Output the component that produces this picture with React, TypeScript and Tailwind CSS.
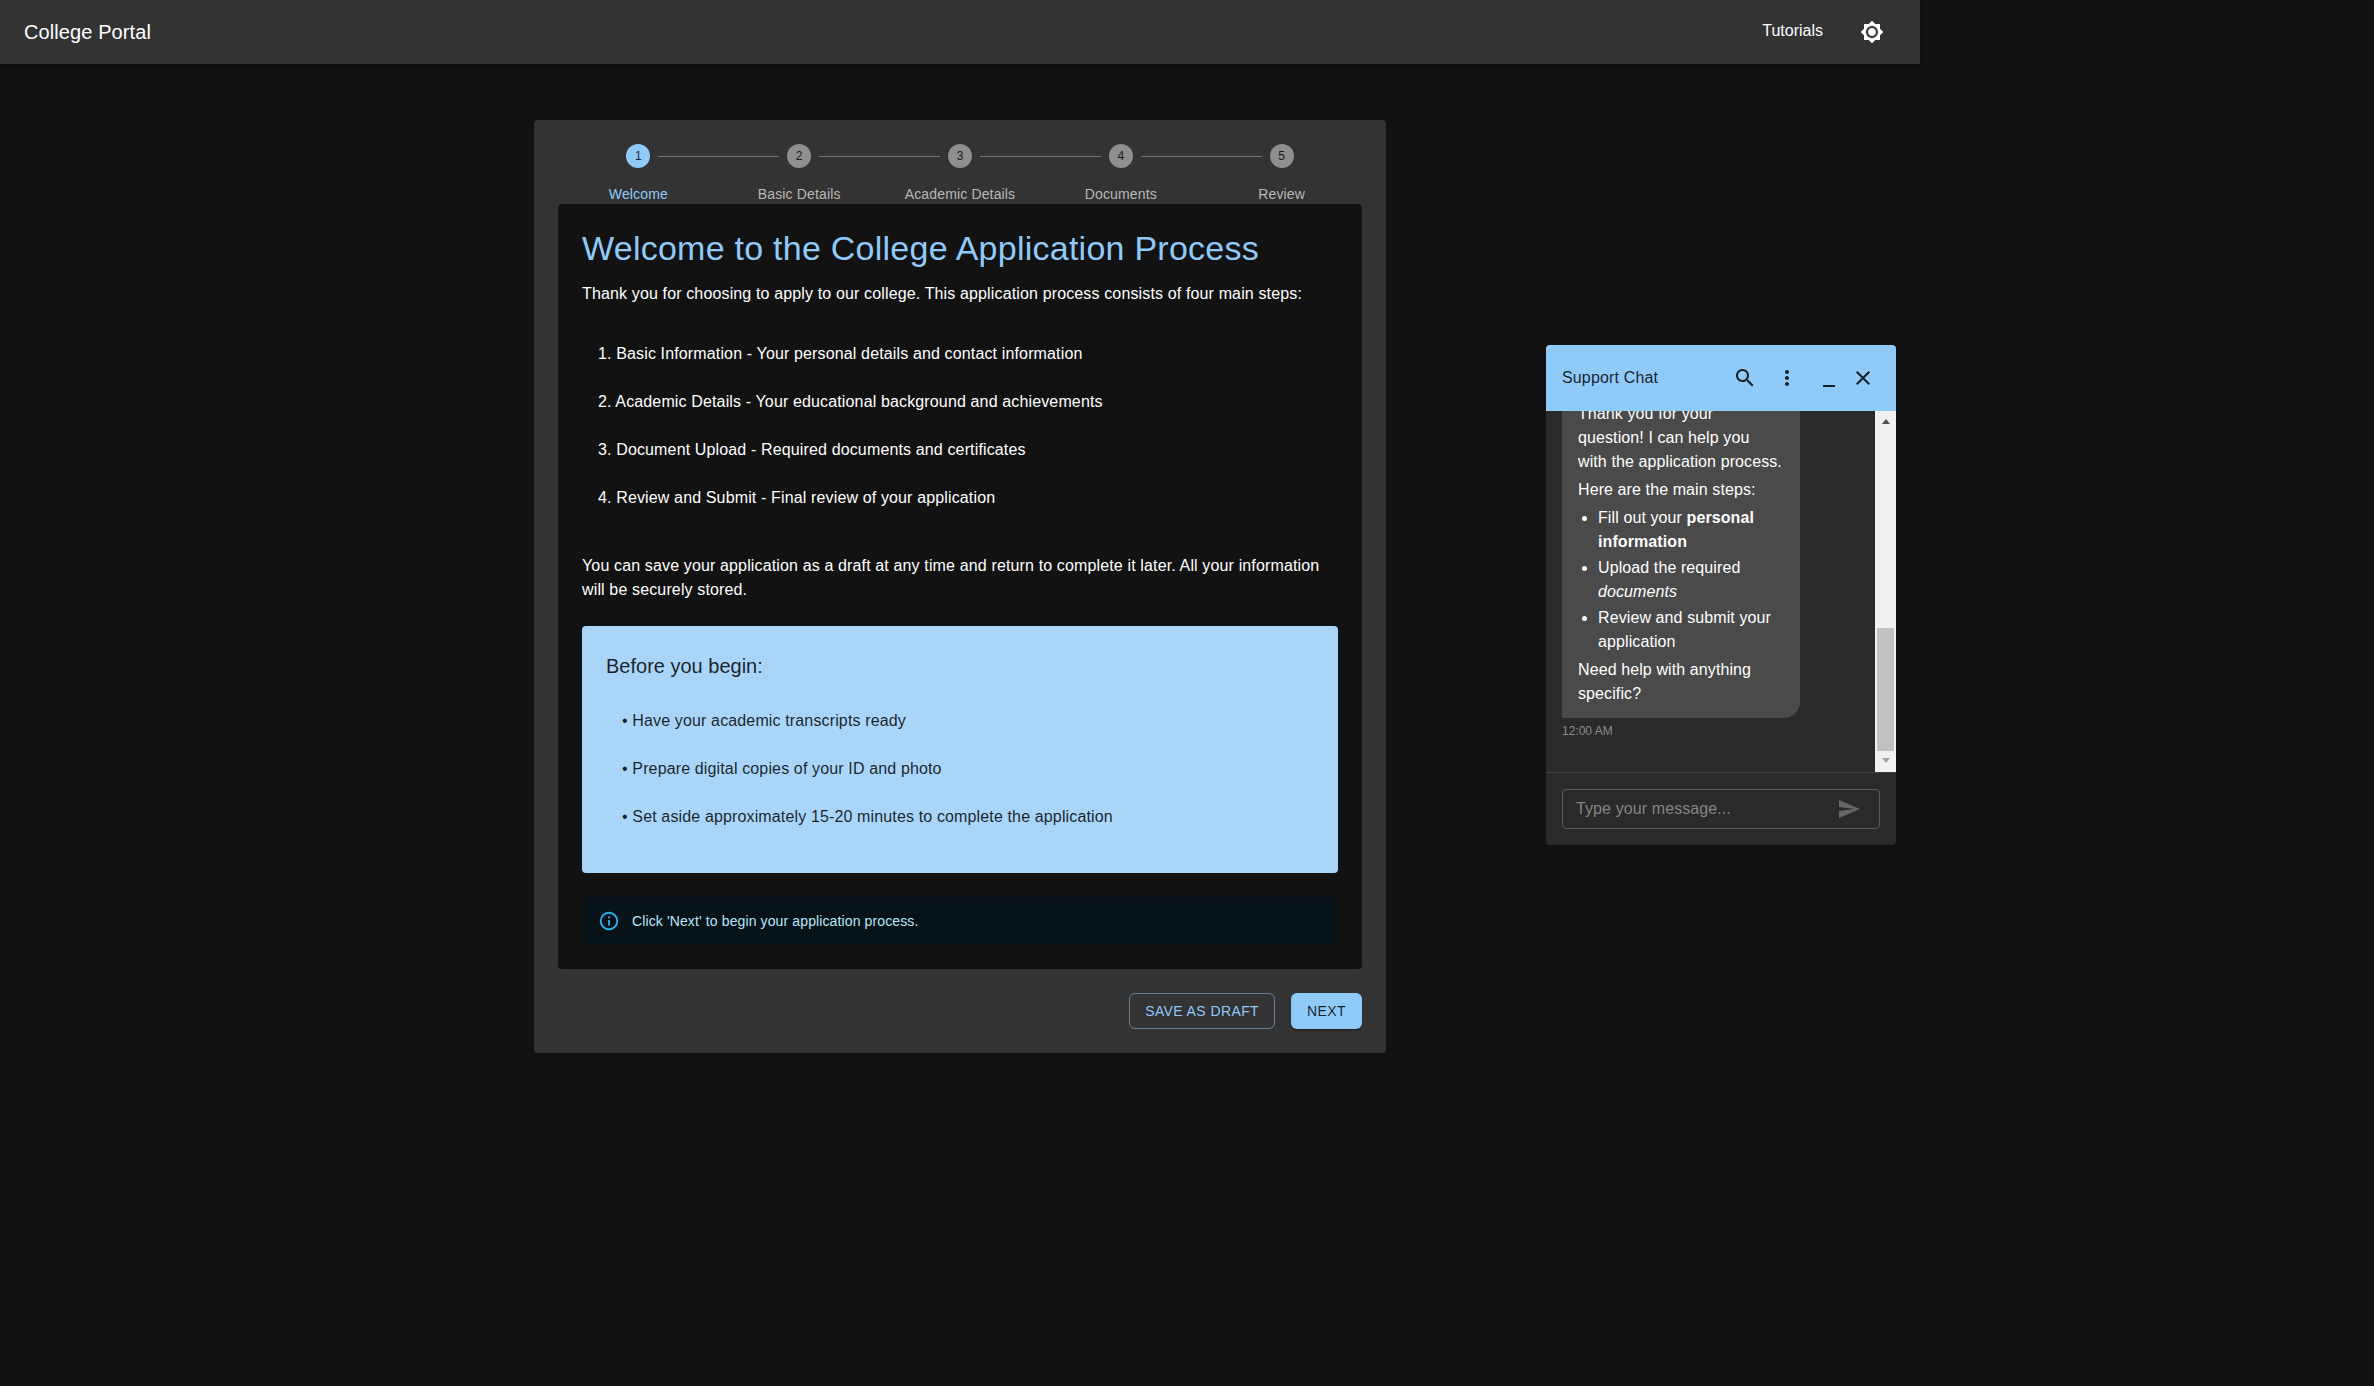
import React from 'react';

const STEPS = ['Welcome', 'Basic Details', 'Academic Details', 'Documents', 'Review'];

const MAIN_STEPS = [
  '1. Basic Information - Your personal details and contact information',
  '2. Academic Details - Your educational background and achievements',
  '3. Document Upload - Required documents and certificates',
  '4. Review and Submit - Final review of your application',
];

const CHECKLIST = [
  '• Have your academic transcripts ready',
  '• Prepare digital copies of your ID and photo',
  '• Set aside approximately 15-20 minutes to complete the application',
];

function Icon({ d, className }: { d: string; className?: string }) {
  return (
    <svg viewBox="0 0 24 24" fill="currentColor" className={className ?? 'h-6 w-6'}>
      <path d={d} />
    </svg>
  );
}

const ICONS = {
  brightness:
    'M20 8.69V4h-4.69L12 .69 8.69 4H4v4.69L.69 12 4 15.31V20h4.69L12 23.31 15.31 20H20v-4.69L23.31 12 20 8.69zM12 18c-3.31 0-6-2.69-6-6s2.69-6 6-6 6 2.69 6 6-2.69 6-6 6zm0-10c-2.21 0-4 1.79-4 4s1.79 4 4 4 4-1.79 4-4-1.79-4-4-4z',
  search:
    'M15.5 14h-.79l-.28-.27C15.41 12.59 16 11.11 16 9.5 16 5.91 13.09 3 9.5 3S3 5.91 3 9.5 5.91 16 9.5 16c1.61 0 3.09-.59 4.23-1.57l.27.28v.79l5 4.99L20.49 19l-4.99-5zm-6 0C7.01 14 5 11.99 5 9.5S7.01 5 9.5 5 14 7.01 14 9.5 11.99 14 9.5 14z',
  more: 'M12 8c1.1 0 2-.9 2-2s-.9-2-2-2-2 .9-2 2 .9 2 2 2zm0 2c-1.1 0-2 .9-2 2s.9 2 2 2 2-.9 2-2-.9-2-2-2zm0 6c-1.1 0-2 .9-2 2s.9 2 2 2 2-.9 2-2-.9-2-2-2z',
  minimize: 'M6 19h12v2H6z',
  close: 'M19 6.41 17.59 5 12 10.59 6.41 5 5 6.41 10.59 12 5 17.59 6.41 19 12 13.41 17.59 19 19 17.59 13.41 12z',
  send: 'M2.01 21 23 12 2.01 3 2 10l15 2-15 2z',
  info: 'M11,9H13V7H11M12,20C7.59,20 4,16.41 4,12C4,7.59 7.59,4 12,4C16.41,4 20,7.59 20,12C20,16.41 16.41,20 12,20M12,2A10,10 0 0,0 2,12A10,10 0 0,0 12,22A10,10 0 0,0 22,12A10,10 0 0,0 12,2M11,17H13V11H11V17Z',
};

function Stepper() {
  return (
    <div className="grid grid-cols-5">
      {STEPS.map((label, i) => (
        <div key={label} className="relative flex flex-col items-center">
          {i > 0 && (
            <div className="absolute top-3 right-[calc(50%+20px)] left-[calc(-50%+20px)] h-px bg-[#757575]" />
          )}
          <div
            className={
              i === 0
                ? 'flex h-6 w-6 items-center justify-center rounded-full bg-[#90caf9] text-xs text-black/85'
                : 'flex h-6 w-6 items-center justify-center rounded-full bg-[#8f8f8f] text-xs text-black/85'
            }
          >
            {i + 1}
          </div>
          <div
            className={
              i === 0
                ? 'mt-4 h-5 text-sm leading-5 tracking-[0.15px] text-[#90caf9]'
                : 'mt-4 h-5 text-sm leading-5 tracking-[0.15px] text-[#b8b8b8]'
            }
          >
            {label}
          </div>
        </div>
      ))}
    </div>
  );
}

function ChatWidget() {
  return (
    <div className="absolute top-[345px] right-6 flex h-[500px] w-[350px] flex-col overflow-hidden rounded bg-[#2a2a2a] shadow-[0_8px_10px_-5px_rgba(0,0,0,0.2)]">
      <div className="flex h-[66px] shrink-0 items-center bg-[#90caf9] px-4 text-black/85">
        <span className="flex-1 text-base tracking-[0.15px]">Support Chat</span>
        <Icon d={ICONS.search} className="mr-[18px] h-6 w-6" />
        <Icon d={ICONS.more} className="mr-[18px] h-6 w-6" />
        <Icon d={ICONS.minimize} className="mr-[10px] h-6 w-6" />
        <Icon d={ICONS.close} className="mr-[5px] h-6 w-6" />
      </div>

      <div className="flex h-[361px] shrink-0">
        <div className="min-w-0 flex-1 overflow-hidden px-4">
          <div className="-mt-[21px] w-[238px] rounded-br-2xl bg-[#4a4a4a] px-4 py-3 text-base leading-6 tracking-[0.1px] text-white">
            <p className="mb-1">
              Thank you for your
              <br />
              question! I can help you
              <br />
              with the application process.
            </p>
            <p className="mb-1">Here are the main steps:</p>
            <ul className="mb-1 list-disc pl-5">
              <li className="mb-0.5">
                Fill out your <strong>personal information</strong>
              </li>
              <li className="mb-0.5">
                Upload the required <em>documents</em>
              </li>
              <li>Review and submit your application</li>
            </ul>
            <p>Need help with anything specific?</p>
          </div>
          <div className="mt-[3px] text-xs leading-5 text-[#8c8c8c]">12:00 AM</div>
        </div>
        {/* scrollbar */}
        <div className="flex w-[21px] shrink-0 flex-col items-center bg-[#f1f1f1]">
          <div className="mt-2 h-0 w-0 border-x-[4px] border-b-[5px] border-x-transparent border-b-[#505050]" />
          <div className="mt-[204px] h-[123px] w-[17px] bg-[#c1c1c1]" />
          <div className="mt-[7px] h-0 w-0 border-x-[4px] border-t-[5px] border-x-transparent border-t-[#a3a3a3]" />
        </div>
      </div>

      <div className="flex-1 border-t border-[#444444] p-4">
        <div className="flex h-10 items-center rounded border border-[#5c5c5c] pr-[18px] pl-[13px]">
          <span className="flex-1 text-base tracking-[0.1px] text-[#858585]">Type your message...</span>
          <Icon d={ICONS.send} className="h-6 w-6 text-[#666666]" />
        </div>
      </div>
    </div>
  );
}

export default function App() {
  return (
    <div className="min-h-screen bg-[#121212] font-['Liberation_Sans',Arial,sans-serif] text-white">
      <div className="relative w-[1920px]">
        <header className="flex h-16 items-center bg-[#333333] pr-9 pl-6 shadow-[0_2px_4px_-1px_rgba(0,0,0,0.2),0_4px_5px_0_rgba(0,0,0,0.14)]">
          <div className="flex-1 text-xl tracking-[0.1px]">College Portal</div>
          <span className="mr-[37px] -translate-y-px text-base">Tutorials</span>
          <Icon d={ICONS.brightness} />
        </header>

        <main className="mx-auto mt-14 w-[852px] rounded bg-[#333333] p-6">
          <Stepper />

          <section className="rounded bg-[#121212] p-6">
            <h1 className="mb-[14px] text-[34px] leading-[40px] tracking-[0.25px] text-[#90caf9]">
              Welcome to the College Application Process
            </h1>
            <p className="mb-4 text-base leading-6 tracking-[0.14px]">
              Thank you for choosing to apply to our college. This application process consists of four main steps:
            </p>
            <ul className="py-2">
              {MAIN_STEPS.map((s) => (
                <li key={s} className="px-4 py-3 text-base leading-6 tracking-[0.14px]">
                  {s}
                </li>
              ))}
            </ul>
            <p className="mt-6 mb-6 text-base leading-6 tracking-[0.14px]">
              You can save your application as a draft at any time and return to complete it later. All your information
              will be securely stored.
            </p>

            <div className="rounded bg-[#a9d5f9] p-6 text-black/85">
              <h2 className="text-xl leading-8">Before you begin:</h2>
              <ul className="mt-[15px] py-0">
                {CHECKLIST.map((s) => (
                  <li key={s} className="px-4 py-3 text-base leading-6 tracking-[0.14px]">
                    {s}
                  </li>
                ))}
              </ul>
              <div className="h-2" />
            </div>

            <div className="mt-6 flex h-12 items-center rounded bg-[#071318] px-4 text-sm tracking-[0.12px] text-[#b8e7fb]">
              <Icon d={ICONS.info} className="mr-3 h-[22px] w-[22px] text-[#29b6f6]" />
              Click 'Next' to begin your application process.
            </div>
          </section>

          <div className="mt-6 flex justify-end gap-4">
            <button className="h-9 rounded-md border border-[#90caf9]/50 px-[15px] text-sm tracking-[0.4px] text-[#90caf9] uppercase">
              Save as draft
            </button>
            <button className="h-9 rounded-md bg-[#90caf9] px-4 text-sm tracking-[0.4px] text-black/85 uppercase shadow-[0_3px_1px_-2px_rgba(0,0,0,0.2),0_2px_2px_0_rgba(0,0,0,0.14)]">
              Next
            </button>
          </div>
        </main>

        <ChatWidget />
      </div>
    </div>
  );
}
